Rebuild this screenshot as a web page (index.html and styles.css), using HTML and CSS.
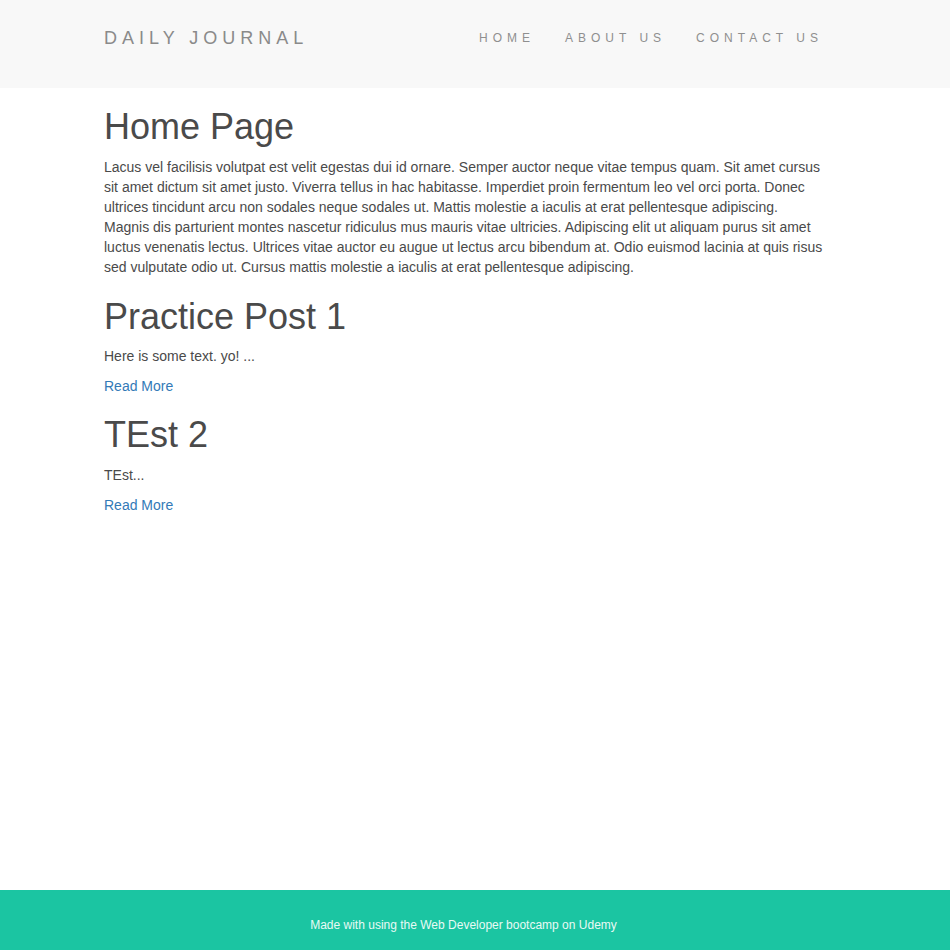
FILE: index.html
```html
<!DOCTYPE html>
<html lang="en">
<head>
<meta charset="utf-8">
<title>Daily Journal</title>
<link rel="stylesheet" href="styles.css">
</head>
<body>
<header class="navbar">
  <div class="container nav-inner">
    <a class="brand" href="#">DAILY JOURNAL</a>
    <ul class="nav-links">
      <li><a href="#">HOME</a></li>
      <li><a href="#">ABOUT US</a></li>
      <li><a href="#">CONTACT US</a></li>
    </ul>
  </div>
</header>
<main class="container content">
  <h1 class="first">Home Page</h1>
  <p>Lacus vel facilisis volutpat est velit egestas dui id ornare. Semper auctor neque vitae tempus quam. Sit amet cursus sit amet dictum sit amet justo. Viverra tellus in hac habitasse. Imperdiet proin fermentum leo vel orci porta. Donec ultrices tincidunt arcu non sodales neque sodales ut. Mattis molestie a iaculis at erat pellentesque adipiscing. Magnis dis parturient montes nascetur ridiculus mus mauris vitae ultricies. Adipiscing elit ut aliquam purus sit amet luctus venenatis lectus. Ultrices vitae auctor eu augue ut lectus arcu bibendum at. Odio euismod lacinia at quis risus sed vulputate odio ut. Cursus mattis molestie a iaculis at erat pellentesque adipiscing.</p>
  <h1>Practice Post 1</h1>
  <p>Here is some text. yo! ...</p>
  <p><a class="more" href="#">Read More</a></p>
  <h1 class="tight">TEst 2</h1>
  <p>TEst...</p>
  <p><a class="more" href="#">Read More</a></p>
</main>
<footer class="footer">
  <p>Made with using the Web Developer bootcamp on Udemy</p>
</footer>
</body>
</html>
```
FILE: styles.css
```css
* { box-sizing: border-box; }
html, body { margin: 0; padding: 0; }
body {
  font-family: "Liberation Sans", Arial, Helvetica, sans-serif;
  font-size: 14px;
  line-height: 20px;
  color: #4a4a4a;
  background: #fff;
  min-height: 100vh;
  display: flex;
  flex-direction: column;
}
.container {
  width: 742px;
  margin: 0 auto;
}
.navbar {
  background: #f8f8f8;
  height: 88px;
}
.nav-inner {
  display: flex;
  justify-content: space-between;
  align-items: flex-start;
}
.brand {
  font-size: 18px;
  letter-spacing: 5px;
  color: #8a8a8a;
  text-decoration: none;
  line-height: 20px;
  padding-top: 28px;
}
.nav-links {
  list-style: none;
  margin: 0;
  padding: 0;
  display: flex;
  gap: 30px;
  padding-top: 27px;
  margin-right: 23px;
}
.nav-links a {
  font-size: 12px;
  letter-spacing: 5px;
  color: #8f8f8f;
  text-decoration: none;
  line-height: 14px;
}
.content {
  flex: 1;
  padding-right: 22px;
  padding-bottom: 20px;
}
h1 {
  font-size: 36px;
  font-weight: 500;
  line-height: 1.1;
  margin: 20px 0 10px;
  color: #4a4a4a;
}
h1.first { margin-top: 19px; }
h1.tight { margin-top: 19px; }
p { margin: 0 0 10px; }
.more {
  color: #337ab7;
  text-decoration: none;
}
.footer {
  background: #1bc5a2;
  height: 60px;
  display: flex;
  align-items: center;
  justify-content: center;
  padding-right: 23px;
  padding-top: 9px;
}
.footer p {
  margin: 0;
  font-size: 12px;
  color: #e8faf5;
}
```
